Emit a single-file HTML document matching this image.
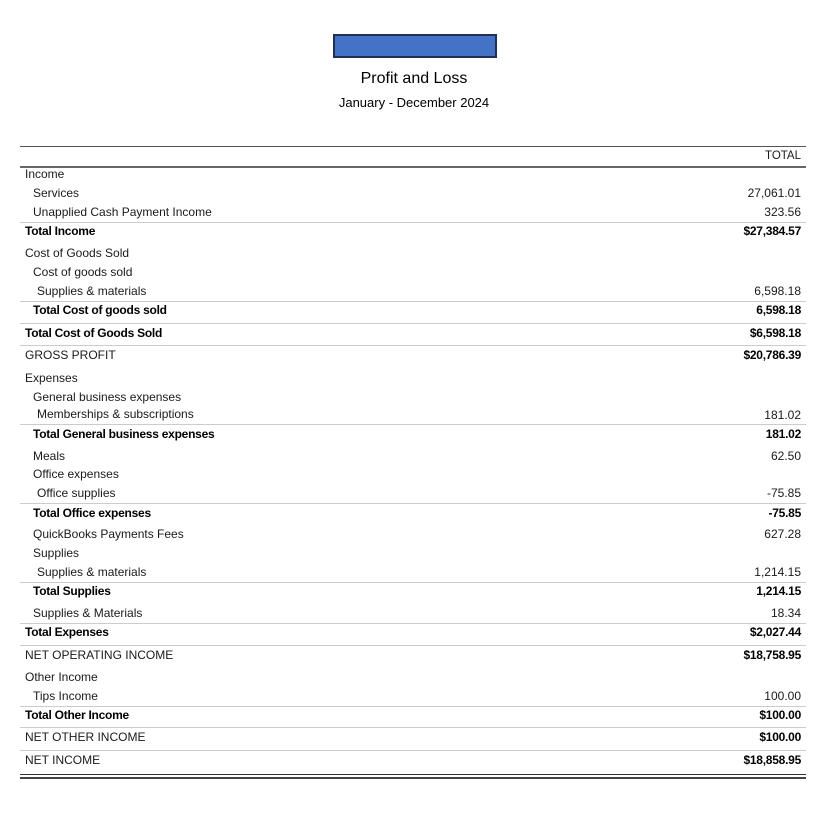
<!DOCTYPE html>
<html><head><meta charset="utf-8"><style>
html,body{margin:0;padding:0;background:#fff;width:828px;height:832px;overflow:hidden;position:relative;font-family:"Liberation Sans",Arial,sans-serif;color:#1a1a1a}
.t{position:absolute;font-size:12px;line-height:14px;white-space:nowrap}
.r{right:27px;text-align:right}
.b{font-weight:bold;letter-spacing:-0.25px;color:#000}
.s{position:absolute;left:20px;width:786px;height:1px;background:#ccc}
</style></head><body>
<div style="position:absolute;left:333px;top:34px;width:160px;height:20px;background:#4472c4;border:2px solid #1f2f55"></div>
<div class="t" style="left:0;width:828px;text-align:center;top:70px;font-size:16px;line-height:18px;color:#000">Profit and Loss</div>
<div class="t" style="left:0;width:828px;text-align:center;top:96px;font-size:13px;color:#000">January - December 2024</div>
<div style="position:absolute;left:20px;top:146px;width:786px;height:1px;background:#555"></div>
<div class="t r" style="top:149px;font-size:11.5px">TOTAL</div>
<div style="position:absolute;left:20px;top:166px;width:786px;height:2px;background:#666"></div>

<div class="t" style="left:25px;top:167px">Income</div>
<div class="t" style="left:33px;top:186px">Services</div><div class="t r" style="top:186px">27,061.01</div>
<div class="t" style="left:33px;top:205px">Unapplied Cash Payment Income</div><div class="t r" style="top:205px">323.56</div>
<div class="s" style="top:222px"></div>
<div class="t b" style="left:25px;top:224px">Total Income</div><div class="t r b" style="top:224px">$27,384.57</div>
<div class="t" style="left:25px;top:246px">Cost of Goods Sold</div>
<div class="t" style="left:33px;top:265px">Cost of goods sold</div>
<div class="t" style="left:37px;top:284px">Supplies &amp; materials</div><div class="t r" style="top:284px">6,598.18</div>
<div class="s" style="top:301px"></div>
<div class="t b" style="left:33px;top:303px">Total Cost of goods sold</div><div class="t r b" style="top:303px">6,598.18</div>
<div class="s" style="top:323px"></div>
<div class="t b" style="left:25px;top:326px">Total Cost of Goods Sold</div><div class="t r b" style="top:326px">$6,598.18</div>
<div class="s" style="top:345px"></div>
<div class="t" style="left:25px;top:348px">GROSS PROFIT</div><div class="t r b" style="top:348px">$20,786.39</div>
<div class="t" style="left:25px;top:371px">Expenses</div>
<div class="t" style="left:33px;top:390px">General business expenses</div>
<div class="t" style="left:37px;top:407px">Memberships &amp; subscriptions</div><div class="t r" style="top:408px">181.02</div>
<div class="s" style="top:424px"></div>
<div class="t b" style="left:33px;top:427px">Total General business expenses</div><div class="t r b" style="top:427px">181.02</div>
<div class="t" style="left:33px;top:449px">Meals</div><div class="t r" style="top:449px">62.50</div>
<div class="t" style="left:33px;top:467px">Office expenses</div>
<div class="t" style="left:37px;top:486px">Office supplies</div><div class="t r" style="top:486px">-75.85</div>
<div class="s" style="top:503px"></div>
<div class="t b" style="left:33px;top:506px">Total Office expenses</div><div class="t r b" style="top:506px">-75.85</div>
<div class="t" style="left:33px;top:527px">QuickBooks Payments Fees</div><div class="t r" style="top:527px">627.28</div>
<div class="t" style="left:33px;top:546px">Supplies</div>
<div class="t" style="left:37px;top:565px">Supplies &amp; materials</div><div class="t r" style="top:565px">1,214.15</div>
<div class="s" style="top:582px"></div>
<div class="t b" style="left:33px;top:584px">Total Supplies</div><div class="t r b" style="top:584px">1,214.15</div>
<div class="t" style="left:33px;top:606px">Supplies &amp; Materials</div><div class="t r" style="top:606px">18.34</div>
<div class="s" style="top:623px"></div>
<div class="t b" style="left:25px;top:625px">Total Expenses</div><div class="t r b" style="top:625px">$2,027.44</div>
<div class="s" style="top:645px"></div>
<div class="t" style="left:25px;top:648px">NET OPERATING INCOME</div><div class="t r b" style="top:648px">$18,758.95</div>
<div class="t" style="left:25px;top:670px">Other Income</div>
<div class="t" style="left:33px;top:689px">Tips Income</div><div class="t r" style="top:689px">100.00</div>
<div class="s" style="top:706px"></div>
<div class="t b" style="left:25px;top:708px">Total Other Income</div><div class="t r b" style="top:708px">$100.00</div>
<div class="s" style="top:727px"></div>
<div class="t" style="left:25px;top:730px">NET OTHER INCOME</div><div class="t r b" style="top:730px">$100.00</div>
<div class="s" style="top:750px"></div>
<div class="t" style="left:25px;top:753px">NET INCOME</div><div class="t r b" style="top:753px">$18,858.95</div>
<div style="position:absolute;left:20px;top:774px;width:786px;height:1px;background:#333"></div>
<div style="position:absolute;left:20px;top:777px;width:786px;height:2px;background:#444"></div>
</body></html>
